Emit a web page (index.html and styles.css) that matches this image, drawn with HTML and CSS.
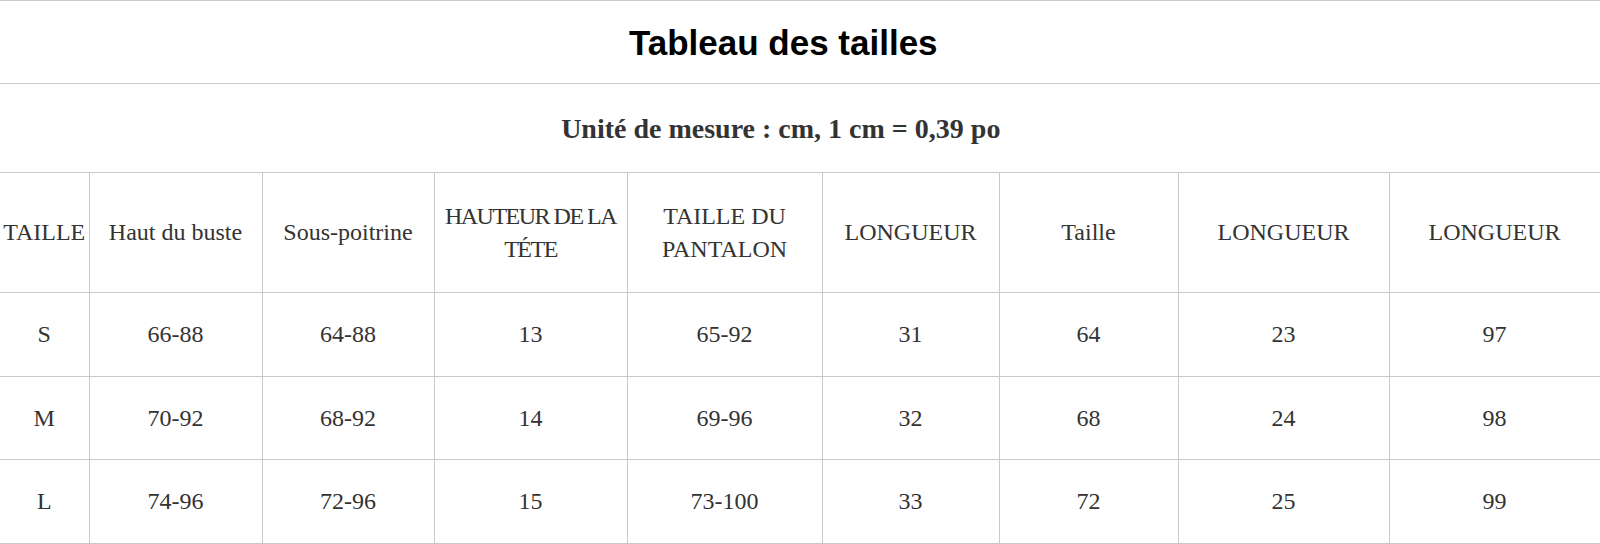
FILE: index.html
```
<!DOCTYPE html>
<html lang="fr">
<head>
<meta charset="utf-8">
<title>Tableau des tailles</title>
<link rel="stylesheet" href="styles.css">
</head>
<body>
<table class="sizes">
  <colgroup>
    <col class="c1"><col class="c2"><col class="c3"><col class="c4"><col class="c5">
    <col class="c6"><col class="c7"><col class="c8"><col class="c9">
  </colgroup>
  <tr class="r-title"><th colspan="9" class="title">Tableau des tailles</th></tr>
  <tr class="r-sub"><th colspan="9" class="sub">Unité de mesure : cm, 1 cm = 0,39 po</th></tr>
  <tr class="r-head">
    <td>TAILLE</td>
    <td>Haut du buste</td>
    <td>Sous-poitrine</td>
    <td class="tight">HAUTEUR DE LA<br>TÉTE</td>
    <td>TAILLE DU<br>PANTALON</td>
    <td>LONGUEUR</td>
    <td>Taille</td>
    <td>LONGUEUR</td>
    <td>LONGUEUR</td>
  </tr>
  <tr class="r-data r-a">
    <td>S</td><td>66-88</td><td>64-88</td><td>13</td><td>65-92</td><td>31</td><td>64</td><td>23</td><td>97</td>
  </tr>
  <tr class="r-data r-b">
    <td>M</td><td>70-92</td><td>68-92</td><td>14</td><td>69-96</td><td>32</td><td>68</td><td>24</td><td>98</td>
  </tr>
  <tr class="r-data r-a">
    <td>L</td><td>74-96</td><td>72-96</td><td>15</td><td>73-100</td><td>33</td><td>72</td><td>25</td><td>99</td>
  </tr>
</table>
</body>
</html>
```
FILE: styles.css
```
html, body {
  margin: 0;
  padding: 0;
  background: #ffffff;
  overflow: hidden;
}

.sizes {
  width: 1600px;
  table-layout: fixed;
  border-collapse: collapse;
  font-family: "Liberation Serif", "Times New Roman", serif;
  font-size: 24px;
  color: #333333;
}

.c1 { width: 89px; }
.c2 { width: 173px; }
.c3 { width: 172px; }
.c4 { width: 193px; }
.c5 { width: 195px; }
.c6 { width: 177px; }
.c7 { width: 179px; }
.c8 { width: 211px; }
.c9 { width: 211px; }

.sizes th,
.sizes td {
  border: 1px solid #c9c9c9;
  padding: 0;
  text-align: center;
  vertical-align: middle;
  line-height: 33px;
  white-space: nowrap;
}

.sizes tr > :first-child {
  border-left: none;
}

.r-title { height: 83px; }
.r-sub { height: 89px; }
.r-head { height: 120px; }
.r-a { height: 84px; }
.r-b { height: 83px; }

.sizes .title {
  font-family: "Liberation Sans", Arial, sans-serif;
  font-weight: 700;
  font-size: 35px;
  color: #000000;
  padding-right: 33px;
}

.sizes .sub {
  font-weight: 700;
  font-size: 28px;
  color: #333333;
  padding-right: 38px;
}

.sizes .tight {
  letter-spacing: -1.5px;
}
```
